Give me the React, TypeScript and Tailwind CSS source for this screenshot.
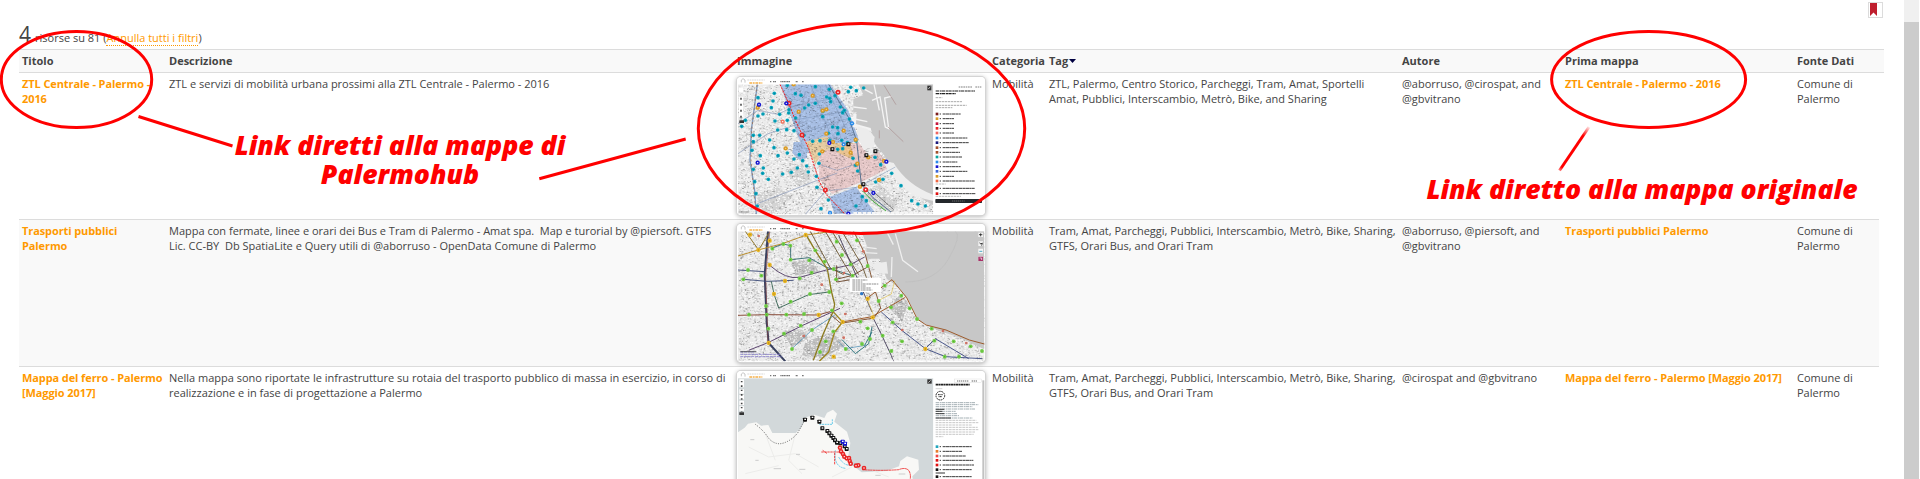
import React from "react";

const COLS =
  "grid grid-cols-[147px_568px_255px_57px_353px_163px_232px_1fr] pl-[3px]";

function rng(seed: number) {
  let s = seed;
  return () => {
    s = (s * 16807) % 2147483647;
    return s / 2147483647;
  };
}

type P = [number, number];

function Texture({ seed, x, y, w, h, n }: { seed: number; x: number; y: number; w: number; h: number; n: number }) {
  const r = rng(seed);
  const tones = ["#8c8c8c", "#b2b2b2", "#cdcdcd", "#ffffff", "#fafafa", "#ffffff", "#d8d8d8"];
  const paths: string[] = tones.map(() => "");
  for (let i = 0; i < n; i++) {
    const t = Math.floor(r() * tones.length);
    const px = (x + r() * w).toFixed(0);
    const py = (y + r() * h).toFixed(0);
    const l = (2 + r() * 4).toFixed(0);
    const th = (2 + r() * 2).toFixed(0);
    paths[t] += `M${px} ${py}h${l}v${th}h-${l}z`;
  }
  return (
    <g>
      {paths.map((d, i) => (
        <path key={i} d={d} fill={tones[i]} opacity={0.75} />
      ))}
    </g>
  );
}

function Dots({ pts, r, fill, inner }: { pts: P[]; r: number; fill: string; inner: string }) {
  return (
    <g>
      {pts.map(([x, y], i) => (
        <g key={i}>
          <circle cx={x} cy={y} r={r} fill={fill} />
          <circle cx={x} cy={y} r={r * 0.32} fill={inner} />
        </g>
      ))}
    </g>
  );
}

function Squares({ pts, fill }: { pts: P[]; fill: string }) {
  return (
    <g>
      {pts.map(([x, y], i) => (
        <g key={i}>
          <rect x={x - 6} y={y - 6} width={12} height={12} rx={2} fill={fill} />
          <rect x={x - 2} y={y - 3} width={5} height={4} fill="#fff" />
        </g>
      ))}
    </g>
  );
}

function TopBar({ y }: { y: number }) {
  return (
    <g transform={`translate(0 ${y})`}>
      <path d="M48 16V9l5-4 6 4v8" fill="none" stroke="#aaa" strokeWidth={2} />
      <path d="M66 9h52" stroke="#c4c4c4" strokeWidth={2} strokeDasharray="5 2" />
      <path d="M72 18h39" stroke="#f5b04a" strokeWidth={4} strokeDasharray="9 2 5 2" />
      <path d="M134 14h5m4 0h10M165 14h30M211 14h7m12 0h6" stroke="#777" strokeWidth={4} strokeDasharray="4 1" />
    </g>
  );
}

function Legend({ rows }: { rows: [number, string, number][] }) {
  return (
    <g>
      {rows.map(([y, c, w], i) => (
        <g key={i}>
          <rect x={631} y={y - 4} width={8} height={8} fill={c} />
          <path d={`M643 ${y}h4m5 0h${w}`} stroke="#2b2b2b" strokeWidth={2.8} strokeDasharray="7 1 11 1" />
        </g>
      ))}
    </g>
  );
}

const frame = "block h-[138px] w-[248px]";

const teal1: P[] = [
  [98, 82], [147, 69], [143, 92], [186, 45], [138, 112], [163, 132], [149, 152], [186, 150], [190, 128], [211, 143],
  [191, 118], [113, 131], [98, 137], [49, 168], [60, 150], [84, 195], [103, 195], [84, 214], [157, 179], [184, 178],
  [206, 181], [236, 195], [133, 209], [146, 232], [80, 240], [84, 297], [105, 256], [158, 256], [186, 248], [206, 266],
  [222, 253], [232, 271], [244, 287], [114, 293], [112, 309], [129, 327], [172, 311], [198, 306], [216, 293], [249, 305],
  [275, 351], [88, 334], [92, 370], [96, 407], [287, 415], [309, 389], [312, 57], [270, 49], [227, 75], [250, 104],
  [270, 99], [210, 70], [238, 113], [304, 80], [316, 94], [329, 76], [293, 123], [292, 139], [313, 84], [345, 110],
  [352, 127], [369, 64], [376, 51], [393, 61], [415, 53], [357, 120], [372, 146], [392, 212], [338, 190], [322, 170],
  [309, 189], [337, 172], [262, 213], [284, 211], [313, 210], [281, 279], [273, 318], [282, 251], [352, 235],
  [383, 264], [397, 302], [391, 285], [449, 261], [466, 283], [499, 309], [527, 346], [559, 391], [578, 401],
  [600, 407], [411, 379], [423, 391], [392, 407], [451, 335], [473, 327], [366, 217], [349, 210], [337, 237],
];

function MapZtl() {
  return (
    <svg className={frame} viewBox="35 20 744 414" preserveAspectRatio="none">
      <defs>
        <clipPath id="ztl">
          <rect x={38} y={42} width={586} height={390} />
        </clipPath>
      </defs>
      <rect x={35} y={20} width={744} height={414} fill="#fff" />
      <TopBar y={20} />
      <g clipPath="url(#ztl)">
        <rect x={38} y={42} width={586} height={390} fill="#ececec" />
        <path d="M100 370l60-20 40 30-30 40-80 6zM180 300l50-20 30 40-40 30zM400 380l60-40 60 50-20 40z" fill="#d3d3d3" />
        <Texture seed={77} x={38} y={42} w={586} h={390} n={11000} />
        <g className="mix-blend-multiply">
          <path d="M165 42h150l55 80 30 85-65 30-95 10-25-55z" fill="#b4cdf5" />
          <path d="M205 215h40v48l-24 5-20-20z" fill="#b4cdf5" />
          <path d="M312 380l80-30 60 80h-125z" fill="#b4cdf5" />
          <path d="M240 215l65-17 15 20 70 0-12 50-60-20-40 20-8 14z" fill="#f8dcae" />
          <path d="M280 250l40-16 40-10 40-8 30 40 30-10 36 45-80 40-95 40-40-45z" fill="#f8d8d8" />
          <path d="M335 228l40-8 12 50-22-10-30-14z" fill="#f9d09a" />
        </g>
        <path
          d="M390 42h36l12 80 40-25 28 80-62-55-60 10-2 38 56 12 8 30 30 38 24 60 36 40 88 50V42z"
          fill="#f3f3f3"
        />
        <path
          d="M400 42l14 32-30 12 0 40 10 0-2 35 44 12 12 46 30 38 20 50 30 40 96 58V42z"
          fill="#c7c7c7"
        />
        <path d="M446 42l16 78M440 90l24-10 16 90 10 5-12-92 20-5M412 54l30 16M388 146l38 8M384 110l40 5" fill="none" stroke="#f4f4f4" strokeWidth={4} />
        <path d="M476 45l36 58M488 170l46 44M462 180v24" fill="none" stroke="#a98f8f" strokeWidth={2} />
        <path d="M396 168l30 8 22 24-4 30-30 8-16-40z" fill="#ececec" />
        <path d="M470 270q60 110 155 122v-18q-80-30-120-96z" fill="#eee" />
        <path d="M96 42L78 180l-4 90 14 90 5 72" fill="none" stroke="#7f99bd" strokeWidth={4} />
        <path d="M95 44L79 180l-2 90 14 150" fill="none" stroke="#a0653a" strokeWidth={2} strokeDasharray="6 8" />
        <path d="M38 160l60-40 60 12 60-30M96 400l180-70 60-22M240 432l70-80M38 250l90-60 110-35" fill="none" stroke="#8796b5" strokeWidth={2} />
        <path d="M310 42l60 100 24 70 14 130 35 40 60 48" fill="none" stroke="#58718f" strokeWidth={3} />
        <path d="M270 350l30 12 100-12 110-60M275 280l60 20 60-20M240 62l-20 100M190 110l130-25M200 150l150-25M225 190l140-45M255 42l60 150M300 42l60 130" fill="none" stroke="#7890b4" strokeWidth={1.5} />
        <path d="M164 42l26 57 22 55 38 80 32 100 22 40 56 58" fill="none" stroke="#f01c1c" strokeWidth={3} strokeDasharray="7 3" />
        <path d="M412 362l30 30 40 30" fill="none" stroke="#46ae3c" strokeWidth={3} />
        <path d="M435 356l70 62" fill="none" stroke="#444" strokeWidth={2} />
        <Dots pts={teal1} r={5.5} fill="#08a5bd" inner="#067a91" />
        <Dots
          pts={[[97, 112], [262, 76], [220, 124], [292, 121], [303, 117], [355, 181], [391, 208], [303, 190], [323, 215], [181, 234], [291, 243], [376, 247], [396, 280], [429, 261], [461, 329], [404, 349], [205, 42], [476, 272]]}
          r={6.5}
          fill="#d99a26"
          inner="#f8d48a"
        />
        <Dots pts={[[338, 66], [191, 99], [230, 194], [300, 359], [421, 358]]} r={7.5} fill="#e82626" inner="#fff" />
        <Dots pts={[[172, 154]]} r={6.5} fill="#ef7560" inner="#fff" />
        <Dots pts={[[183, 99], [101, 103], [312, 218], [97, 277], [483, 274], [444, 368], [369, 430]]} r={6.5} fill="#1515d0" inner="#fff" />
        <Dots pts={[[355, 222], [380, 159], [314, 428]]} r={6.5} fill="#288bea" inner="#fff" />
        <Squares pts={[[321, 237], [369, 222], [423, 255], [450, 243], [414, 342]]} fill="#111" />
        <rect x={606} y={46} width={12} height={14} fill="#333" />
        <path d="M609 56l6-7" stroke="#fff" strokeWidth={2} />
        <path d="M47 52v14M47 80v60" stroke="#fff" strokeWidth={12} />
        <path d="M47 82v70" stroke="#555" strokeWidth={5} strokeDasharray="6 12" />
        <path d="M42 154h14" stroke="#333" strokeWidth={8} />
        <path d="M384 428h238" stroke="#f6f6f6" strokeWidth={6} strokeDasharray="11 3" />
        <path d="M40 425h32" stroke="#666" strokeWidth={2} />
      </g>
      <rect x={624} y={42} width={153} height={390} fill="#fff" />
      <path d="M700 50h40m10 0h18" stroke="#aaa" strokeWidth={5} strokeDasharray="5 2" />
      <path d="M631 62h118M631 70h60" stroke="#222" strokeWidth={3.5} strokeDasharray="10 2 6 1" />
      <path d="M631 82h20M631 94h80M631 105h93M631 112h50" stroke="#999" strokeWidth={2.5} strokeDasharray="7 2" />
      <Legend
        rows={[
          [131, "#7b1d1d", 54], [145, "#d99a26", 34], [160, "#c4143c", 34], [174, "#e82626", 34], [188, "#ef6560", 34],
          [203, "#288bea", 74], [217, "#17177c", 78], [232, "#a3502b", 48], [246, "#a3502b", 52], [260, "#08a5a0", 58],
          [275, "#288bea", 44], [289, "#1515d0", 54], [303, "#3a66d8", 74], [318, "#d99a26", 34], [332, "#ef6540", 96],
          [354, "#111", 96], [370, "#e01010", 98],
        ]}
      />
      <path d="M631 341h30M631 378h76" stroke="#999" strokeWidth={2} strokeDasharray="7 2" />
      <rect x={630} y={386} width={140} height={12} rx={2} fill="#23272b" />
      <path d="M680 392h38" stroke="#888" strokeWidth={2} strokeDasharray="4 2" />
    </svg>
  );
}

function MapTransit() {
  return (
    <svg className={frame} viewBox="35 26 744 414" preserveAspectRatio="none">
      <defs>
        <clipPath id="bus">
          <rect x={38} y={48} width={739} height={390} />
        </clipPath>
      </defs>
      <rect x={35} y={26} width={744} height={414} fill="#fff" />
      <TopBar y={26} />
      <g clipPath="url(#bus)">
        <rect x={38} y={48} width={739} height={390} fill="#ebebeb" />
        <path d="M170 350l60-10 20 30-50 25zM240 380l80-30 40 40-70 40-60-10zM520 240l30 20-20 60-36-40zM200 140l60-10 20 40-70 10z" fill="#bdbdbd" />
        <Texture seed={4021} x={38} y={48} w={739} h={390} n={13000} />
        <path d="M400 48l20 30 10 50 50 10 10 50 40 35 30 65 60 40 157 70V48z" fill="#efefef" />
        <path d="M408 48l16 42-2 40 40 0 22 60 40 30 26 36 30 60 60 30 60 20 77 36V48z" fill="#c7c7c7" />
        <path d="M484 48l20 40M510 55l22 80 46 34M424 96l30 4M420 112l36 2M500 125l-2 60" fill="none" stroke="#eee" strokeWidth={4} />
        <path d="M440 145l44-6 4 36-34-2z" fill="#ececec" />
        <path d="M540 200q90 0 130-70t20-82" fill="none" stroke="#bababa" strokeWidth={1.5} />
        <path d="M128 48l-10 130 6 140 6 65 50 55" fill="none" stroke="#39415f" strokeWidth={6} />
        <path d="M133 48l-12 135 7 200" fill="none" stroke="#8a4545" strokeWidth={2} />
        <g fill="none" strokeWidth={2.8}>
          <path d="M38 122l60-18 70-18 75-27 70-10" stroke="#b98a22" />
          <path d="M60 48l40 56 30-50" stroke="#8a7020" />
          <path d="M70 405l60-24 100-50 114-52" stroke="#543a68" />
          <path d="M38 300l90-2 150 1 36-10" stroke="#83422e" />
          <path d="M38 164l80 5M55 192l70 6 80-3" stroke="#3e4c78" />
          <path d="M133 150q50 44 90 36l80-22 70-15 45-24" stroke="#574369" />
          <path d="M140 98l34-12 22 5v42l55-6 50 28 80 26" stroke="#356b70" />
          <path d="M146 236l-8-38M146 236l14 42 90-40 60-8" stroke="#3d6858" />
          <path d="M242 58l28 48 36 55 12 66 10 40-4 20-30 68-30 80" stroke="#8c7b20" strokeWidth={4} />
          <path d="M255 48l60 110 40 20M300 48l56 96 25 40M320 48l80 130M350 48l60 102 18 50" stroke="#6c5734" />
          <path d="M385 48l35 70 30 110 16 50-20 30-100 16-30-26" stroke="#80502c" />
          <path d="M332 192l50-12 45-25M334 150v50l60-10" stroke="#6d482d" />
          <path d="M320 285l32 35-24 30-18 60-28 28" stroke="#9b841e" strokeWidth={4} />
          <path d="M350 320l90-16 100-58M430 245l70-52 44 54 32 64 26 18 60 15 70 30 75 20" stroke="#995321" />
          <path d="M442 305l28 56 28 60 6 17M340 60l100 230" stroke="#4b445f" />
          <path d="M468 290l60 54 72 56 60 24 110 6M600 400l30-30 100 60" stroke="#404e84" />
          <path d="M440 335l-10 50-40 30-40-42M440 350l-22 40" stroke="#267078" />
          <path d="M200 400l60-56 70-46M340 380l20 20 60-10" stroke="#3982ac" strokeWidth={2} />
          <path d="M458 256l40-20 10-40M425 250l20 50" stroke="#dfc04b" strokeWidth={2} />
        </g>
        <Dots
          pts={[[141, 100], [174, 86], [195, 91], [196, 133], [252, 135], [259, 172], [223, 189], [68, 164], [54, 192], [108, 181], [122, 272], [124, 298], [71, 298], [183, 298], [236, 296], [196, 259], [254, 236], [312, 230], [298, 139], [325, 161], [332, 192], [376, 147], [270, 105], [350, 119], [334, 79], [395, 75], [427, 152], [320, 285], [349, 264], [382, 181], [405, 319], [460, 257], [478, 211], [497, 276], [528, 241], [553, 279], [575, 311], [619, 340], [502, 321], [530, 378], [498, 407], [472, 361], [427, 339], [434, 371], [410, 386], [361, 401], [324, 348], [301, 378], [284, 410], [129, 340], [176, 355], [226, 331], [260, 344], [200, 401], [627, 376], [685, 378], [736, 393], [658, 424], [701, 424], [770, 407]]}
          r={5.8}
          fill="#74cf4a"
          inner="#4fa72e"
        />
        <Dots
          pts={[[74, 58], [133, 76], [99, 104], [133, 149], [241, 59], [179, 197], [146, 236], [280, 299], [352, 320], [427, 250], [442, 306], [130, 383], [325, 424], [600, 401]]}
          r={6.5}
          fill="#e8b726"
          inner="#b8860e"
        />
        <Dots pts={[[100, 62], [289, 208], [235, 362], [356, 173], [360, 296], [355, 367], [531, 344], [653, 347], [414, 108], [723, 383]]} r={4} fill="#df6850" inner="#4c9de0" />
        <circle cx={409} cy={235} r={5} fill="#2e77c7" />
        <rect x={373} y={187} width={94} height={43} rx={4} fill="#fff" />
        <path d="M381 194h45M381 200h30M381 206h78M381 212h40M381 218h55M381 224h60" stroke="#555" strokeWidth={2} strokeDasharray="8 2 5 1" />
        <path d="M759 52h14v13h-14zM759 78h14v14h-14zM759 100h14v14h-14zM759 123h14v14h-14z" fill="#f5f5f5" />
        <path d="M766 54v9m-5-5h10M763 82l3 4 5-3-2 8" stroke="#222" strokeWidth={2.5} fill="none" />
        <path d="M762 108h9" stroke="#4aabc7" strokeWidth={3} />
        <rect x={759} y={124} width={14} height={13} fill="#a83068" />
        <path d="M763 128h6v6" stroke="#fff" strokeWidth={2} fill="none" />
        <path d="M45 410h45M45 417h120M45 424h124" stroke="#8278c8" strokeWidth={2.5} strokeDasharray="9 2" />
        <path d="M45 409h48" stroke="#222" strokeWidth={2} />
        <path d="M450 435h325" stroke="#f6f6f6" strokeWidth={5} strokeDasharray="11 3" />
      </g>
    </svg>
  );
}

function MapRail() {
  return (
    <svg className={frame} viewBox="35 32 744 414" preserveAspectRatio="none">
      <rect x={35} y={32} width={744} height={414} fill="#fff" />
      <TopBar y={32} />
      <rect x={38} y={54} width={586} height={390} fill="#d2d8da" />
      <path
        d="M38 216l20-14 10-12 25-4 14 10 22-2 12 24 70 0 16-15 16-32 24-8 30 10 8-16 18-9 12 12-8 24 38 30 10 34-6 38 14 30 26 20 74-4 38-14 4-16 20-14 34 10 2 30-20 20 8 50v70H38z"
        fill="#f8f8f6"
      />
      <path d="M70 260l60 30 80-10 70 40M120 220l30 80M210 220l-20 80 40 40M380 320l-60 30M60 340l100-24M440 330l50 20" stroke="#ececea" strokeWidth={3} fill="none" />
      <path d="M75 238h12M145 325h22M222 327h18M450 345h16M520 341h20M212 282h12M90 300h10" stroke="#ccc" strokeWidth={3} />
      <path d="M90 192q25 18 40 42 20 22 45 14 24-8 42-30l22-40" fill="none" stroke="#222" strokeWidth={2} strokeDasharray="3 4" />
      <path d="M282 192h39v-17M330 270q-6 50 30 54M340 290q20 35 48 20" fill="none" stroke="#52c4e8" strokeWidth={2.5} strokeDasharray="6 2" />
      <path d="M288 275h48l14 4M292 270l14 10M328 278v34" fill="none" stroke="#ee2222" strokeWidth={2.5} strokeDasharray="7 2" />
      <path d="M410 328q60 4 110 0 20-8 30 2 8 12 4 30" fill="none" stroke="#ee2222" strokeWidth={2.5} strokeDasharray="7 1" />
      <Squares pts={[[239, 178], [261, 172], [282, 184], [291, 204], [306, 212], [312, 219], [318, 226], [324, 233], [329, 240], [335, 247], [345, 249], [358, 258], [364, 266]]} fill="#111" />
      <Squares pts={[[352, 244], [359, 250]]} fill="#1515d0" />
      <Dots pts={[[344, 262], [347, 273], [353, 281], [357, 289], [364, 294], [371, 293], [373, 302], [376, 310], [399, 315], [416, 323], [392, 316]]} r={7} fill="#e82626" inner="#fff" />
      <path d="M42 57h14v24H42zM42 87h14v13H42zM42 104h14v13H42zM42 121h14v13H42zM42 138h14v13H42z" fill="#fff" />
      <path d="M49 62v92" stroke="#444" strokeWidth={5} strokeDasharray="4 9 5 8" />
      <path d="M42 160h14" stroke="#333" strokeWidth={8} />
      <rect x={606} y={57} width={13} height={13} fill="#333" />
      <path d="M609 67l7-7" stroke="#fff" strokeWidth={2} />
      <rect x={624} y={54} width={153} height={390} fill="#fff" />
      <rect x={771} y={60} width={6} height={386} fill="#c2c2c2" />
      <rect x={688} y={56} width={80} height={11} fill="none" stroke="#ccc" />
      <path d="M695 62h36m8 0h18" stroke="#999" strokeWidth={4} strokeDasharray="4 2" />
      <path d="M631 73h102" stroke="#222" strokeWidth={5} strokeDasharray="8 1 5 1" />
      <path d="M631 85h20" stroke="#bbb" strokeWidth={2} />
      <circle cx={645} cy={106} r={13} fill="none" stroke="#222" strokeWidth={3} strokeDasharray="5 2" />
      <path d="M638 103h14M640 109h10" stroke="#222" strokeWidth={3} strokeDasharray="3 1" />
      <path d="M631 127h120M631 133h128M631 139h110M631 146h120M631 153h60M631 160h65M631 166h70M631 173h110" stroke="#77888e" strokeWidth={2} strokeDasharray="10 2 5 1" />
      <path d="M631 180h122M631 187h130M631 194h108M631 201h126M631 208h130M631 215h120M631 222h114M631 229h23" stroke="#aaa" strokeWidth={2} strokeDasharray="8 2" />
      <path d="M631 147h26M631 153h20M631 160h26M631 173h46" stroke="#222" strokeWidth={2.5} />
      <Legend
        rows={[
          [259, "#20a5bd", 88], [273, "#e87c2a", 58], [287, "#ef4545", 70], [300, "#e01010", 92], [314, "#e01010", 94],
          [328, "#111", 88], [349, "#111", 88], [370, "#111", 88], [391, "#d99a26", 70],
        ]}
      />
      <path d="M631 338h28" stroke="#333" strokeWidth={3} />
    </svg>
  );
}

const orange = "font-bold text-[#ff9900] tracking-[-0.1px]";

function Lines({ items, className }: { items: string[]; className?: string }) {
  return (
    <div className={className}>
      {items.map((t, i) => (
        <div key={i} className="whitespace-pre">
          {t}
        </div>
      ))}
    </div>
  );
}

const rows = [
  {
    title: ["ZTL Centrale - Palermo -", "2016"],
    desc: ["ZTL e servizi di mobilità urbana prossimi alla ZTL Centrale - Palermo - 2016"],
    map: <MapZtl />,
    tags: ["ZTL, Palermo, Centro Storico, Parcheggi, Tram, Amat, Sportelli", "Amat, Pubblici, Interscambio, Metrò, Bike, and Sharing"],
    author: ["@aborruso, @cirospat, and", "@gbvitrano"],
    first: "ZTL Centrale - Palermo - 2016",
    bg: "bg-white",
  },
  {
    title: ["Trasporti pubblici", "Palermo"],
    desc: [
      "Mappa con fermate, linee e orari dei Bus e Tram di Palermo - Amat spa.  Map e turorial by @piersoft. GTFS",
      "Lic. CC-BY  Db SpatiaLite e Query utili di @aborruso - OpenData Comune di Palermo",
    ],
    map: <MapTransit />,
    tags: ["Tram, Amat, Parcheggi, Pubblici, Interscambio, Metrò, Bike, Sharing,", "GTFS, Orari Bus, and Orari Tram"],
    author: ["@aborruso, @piersoft, and", "@gbvitrano"],
    first: "Trasporti pubblici Palermo",
    bg: "bg-[#f9f9f9]",
  },
  {
    title: ["Mappa del ferro - Palermo", "[Maggio 2017]"],
    desc: [
      "Nella mappa sono riportate le infrastrutture su rotaia del trasporto pubblico di massa in esercizio, in corso di",
      "realizzazione e in fase di progettazione a Palermo",
    ],
    map: <MapRail />,
    tags: ["Tram, Amat, Parcheggi, Pubblici, Interscambio, Metrò, Bike, Sharing,", "GTFS, Orari Bus, and Orari Tram"],
    author: ["@cirospat and @gbvitrano"],
    first: "Mappa del ferro - Palermo [Maggio 2017]",
    bg: "bg-white",
  },
];

function Annotations() {
  return (
    <div className="pointer-events-none absolute inset-0 text-[26.6px] leading-[29px] font-extrabold whitespace-nowrap text-[#ff0000] italic">
      <svg className="absolute inset-0" width={1920} height={479} fill="none" stroke="#ff0000" strokeWidth={3}>
        <defs>
          <linearGradient id="fade" gradientUnits="userSpaceOnUse" x1={1559.5} y1={170.5} x2={1589} y2={127}>
            <stop offset="0" stopColor="#ff0000" stopOpacity={0.5} />
            <stop offset="0.08" stopColor="#ff0000" />
            <stop offset="0.8" stopColor="#ff0000" />
            <stop offset="1" stopColor="#ff0000" stopOpacity={0.1} />
          </linearGradient>
        </defs>
        <ellipse cx={76.5} cy={79.5} rx={75.2} ry={48} />
        <ellipse cx={861.5} cy={128.5} rx={163.2} ry={105} />
        <ellipse cx={1648.6} cy={79.5} rx={97} ry={48} />
        <path d="M138.5 116.5L232.5 146M539.3 178.7L685.7 139" />
        <path d="M1559.5 170.5L1589 127" stroke="url(#fade)" />
      </svg>
      <div className="absolute top-[131px] left-[200px] flex w-[400px] flex-col items-center">
        <span>Link diretti alla mappe di</span>
        <span>Palermohub</span>
      </div>
      <div className="absolute top-[175px] left-[1342px] w-[600px] text-center">Link diretto alla mappa originale</div>
    </div>
  );
}

export default function App() {
  return (
    <div className="relative flex h-[479px] w-[1920px] overflow-hidden bg-white font-['Open_Sans',sans-serif] text-[11px] leading-[15px] text-[#444444]">
      <main className="flex w-[1904px] flex-col pl-[19px]">
        <div className="flex h-[49px] shrink-0 items-end justify-between">
          <div className="flex items-baseline pb-[2px] whitespace-nowrap">
            <span className="mr-[4px] text-[21px] leading-[25px]">4</span>
            <span>
              risorse su 81 (<a className="border-b border-dotted border-[#ff9900] text-[#ff9900]">Annulla tutti i filtri</a>)
            </span>
          </div>
          <div className="mr-[21px] mb-[31px] h-[16px] w-[15px] border border-[#dcdcdc] bg-white pl-px">
            <svg width={7} height={13} viewBox="0 0 7 13">
              <path d="M0 0h7v13L3.500 9.500 0 13z" fill="#bf1e2e" />
            </svg>
          </div>
        </div>
        <div className={`${COLS} h-[24px] w-[1865px] shrink-0 border-t border-b border-[#dcdcdc] bg-[#f9f9f9] pt-[2px] leading-[18px] font-bold`}>
          <span>Titolo</span>
          <span>Descrizione</span>
          <span>Immagine</span>
          <span>Categoria</span>
          <span className="flex items-center self-start">
            Tag
            <svg className="ml-px" width={7} height={4} viewBox="0 0 7 4">
              <path d="M0 0h7L3.500 4z" fill="#000040" />
            </svg>
          </span>
          <span>Autore</span>
          <span>Prima mappa</span>
          <span>Fonte Dati</span>
        </div>
        {rows.map((r, i) => (
          <div key={i} className={`${COLS} ${r.bg} h-[147px] w-[1860px] shrink-0 border-b border-[#dcdcdc] pt-[3px]`}>
            <Lines items={r.title} className={orange} />
            <Lines items={r.desc} />
            <div className="mt-px h-[138px] w-[248px] overflow-hidden rounded-[4px] shadow-[0_0_0_1px_#d4d4d4,0_1px_4px_1px_rgba(0,0,0,0.28)]">{r.map}</div>
            <span>Mobilità</span>
            <Lines items={r.tags} />
            <Lines items={r.author} />
            <span className={`${orange} whitespace-nowrap`}>{r.first}</span>
            <Lines items={["Comune di", "Palermo"]} />
          </div>
        ))}
      </main>
      <div className="h-full w-[15px] bg-[#f0f0f0] pt-[22px]">
        <div className="h-full bg-[#cccccc]" />
      </div>
      <Annotations />
    </div>
  );
}
